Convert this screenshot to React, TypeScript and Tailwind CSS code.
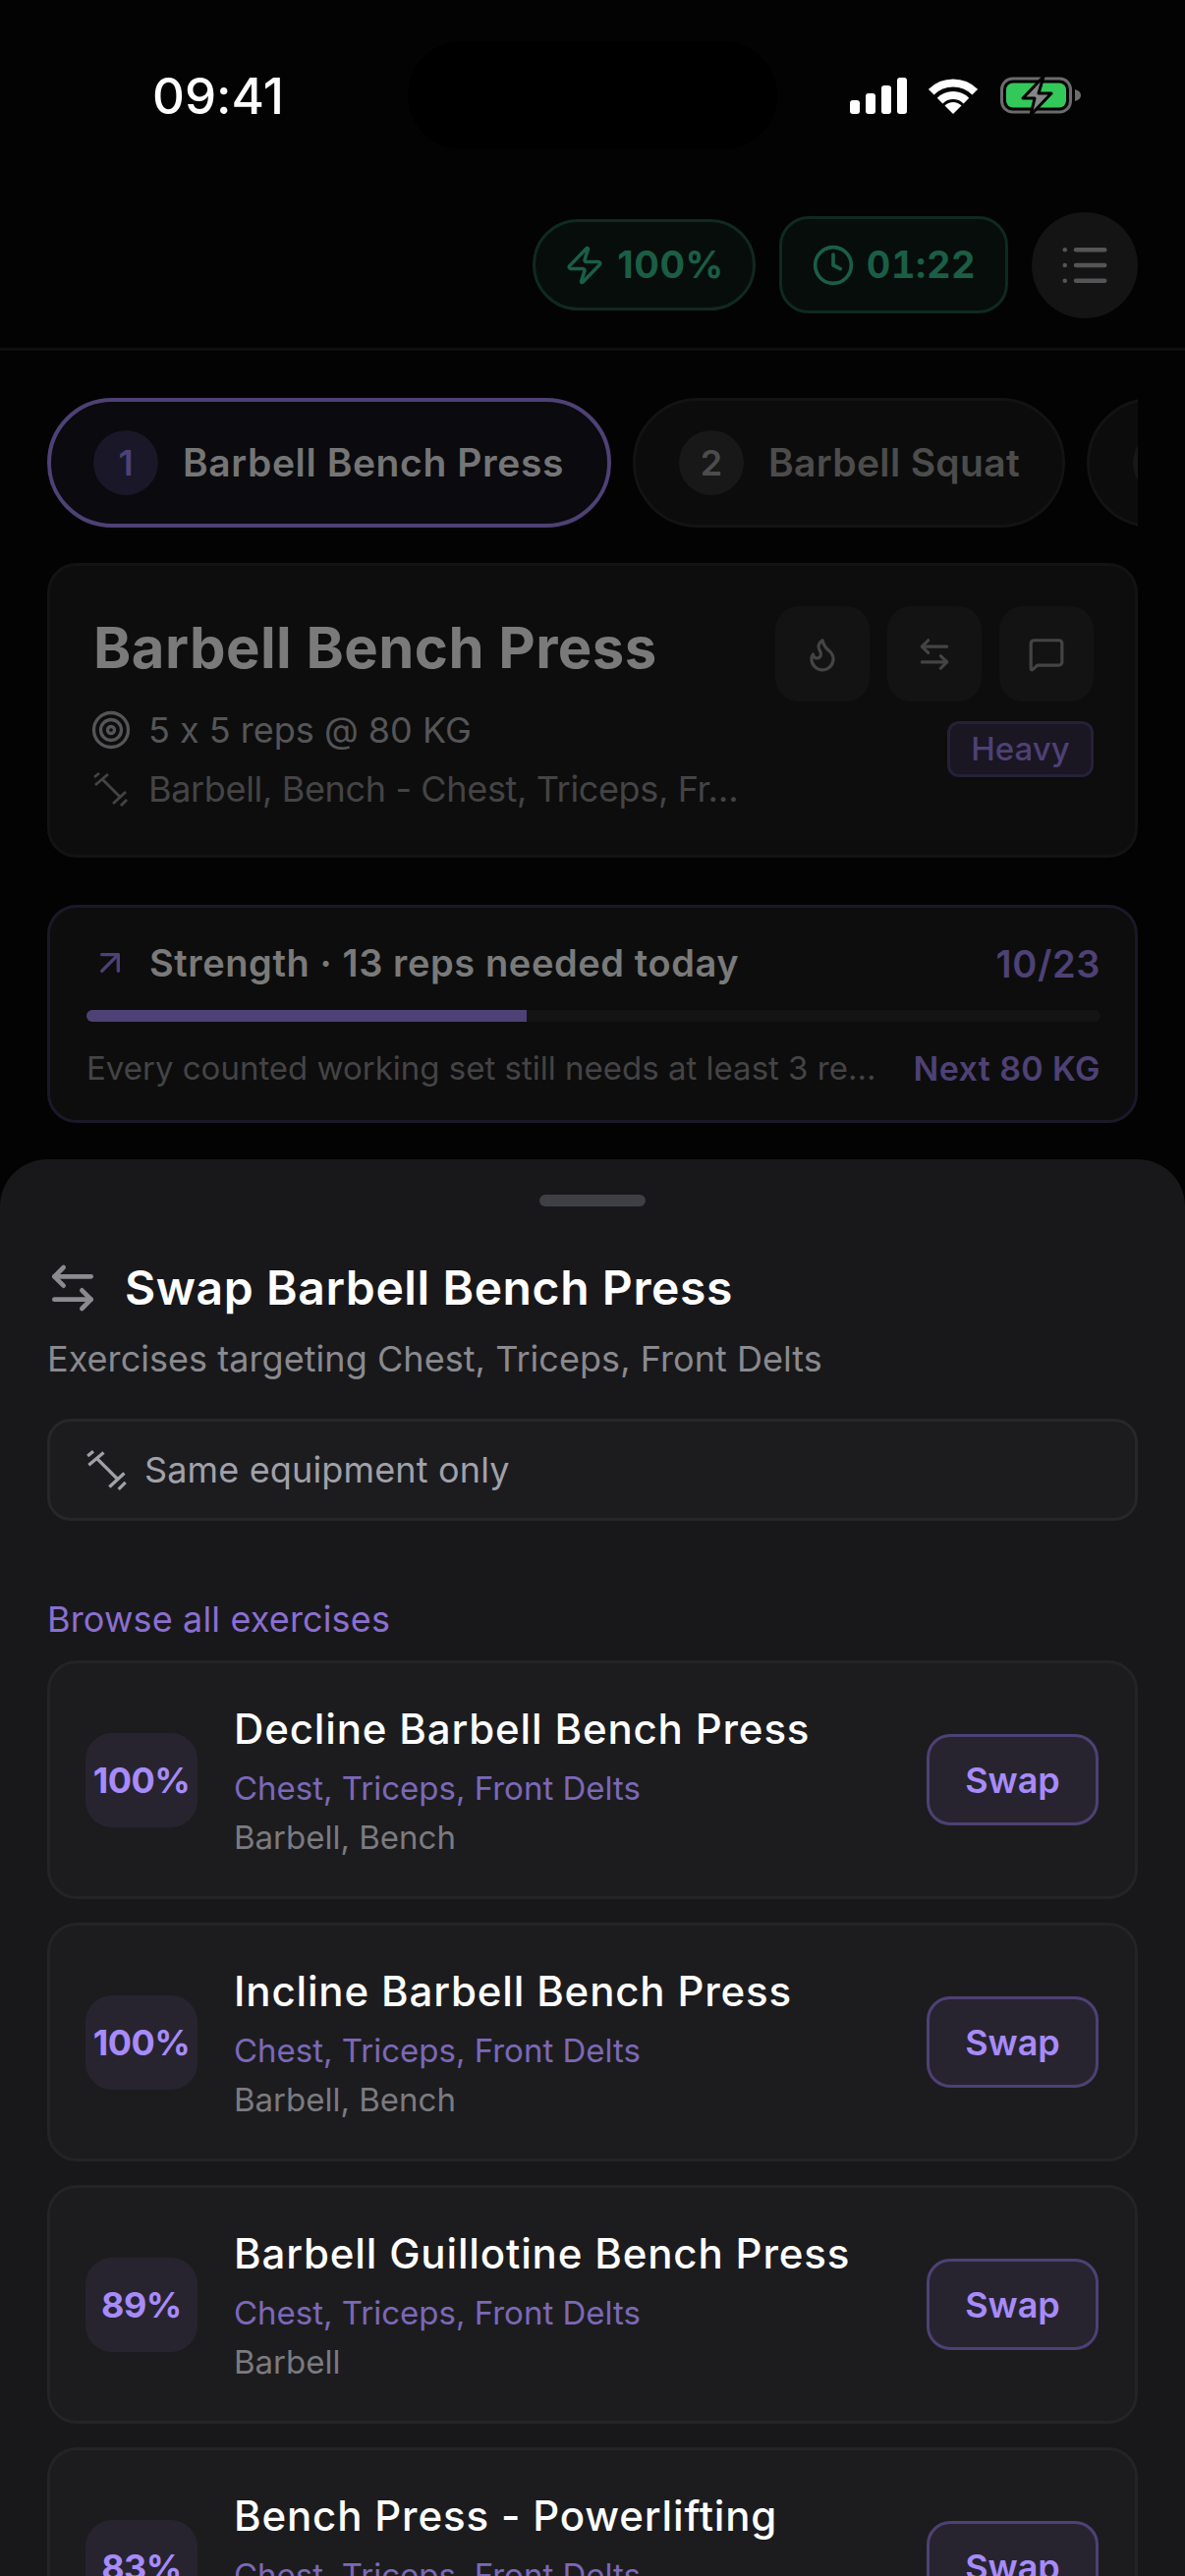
import { ArrowLeftRight, ArrowUpRight, Clock, Flame, List, MessageSquare, Target, Zap } from 'lucide-react';

type Exercise = {
  pct: string;
  name: string;
  equipment: string;
};

const exercises: Exercise[] = [
  { pct: '100%', name: 'Decline Barbell Bench Press', equipment: 'Barbell, Bench' },
  { pct: '100%', name: 'Incline Barbell Bench Press', equipment: 'Barbell, Bench' },
  { pct: '89%', name: 'Barbell Guillotine Bench Press', equipment: 'Barbell' },
  { pct: '83%', name: 'Bench Press - Powerlifting', equipment: 'Barbell, Bench' },
];

function Barbell({ className }: { className?: string }) {
  return (
    <svg viewBox="0 0 36 36" fill="none" stroke="currentColor" strokeWidth="2.8" className={className}>
      <path d="M9 8 L28 27" />
      <path d="M2 14 L15 3 M1 6 L6 2" />
      <path d="M20 33 L33 21 M28 35 L34 29" />
    </svg>
  );
}

function StatusIcons() {
  return (
    <div className="flex items-center">
      <svg width="58" height="37" viewBox="0 0 58 37" fill="#fff">
        <rect x="0" y="23" width="10" height="14" rx="3" />
        <rect x="16" y="16" width="10" height="21" rx="3" />
        <rect x="32" y="8" width="10" height="29" rx="3" />
        <rect x="48" y="0" width="10" height="37" rx="3" />
      </svg>
      <svg width="50" height="36" viewBox="0 0 50 36" fill="none" stroke="#fff" className="ml-[22px]">
        <path d="M2.7 13.7 A31.5 31.5 0 0 1 47.3 13.7" strokeWidth="8" />
        <path d="M11.6 22.6 A19 19 0 0 1 38.4 22.6" strokeWidth="8" />
        <path d="M25 36 L16.5 27.5 A12 12 0 0 1 33.5 27.5 Z" fill="#fff" stroke="none" />
      </svg>
      <svg width="82" height="41" viewBox="0 0 82 41" className="ml-[23px]">
        <rect x="1.5" y="3" width="70" height="34" rx="11" fill="none" stroke="#6b6b6b" strokeWidth="3" />
        <rect x="6" y="7.5" width="61" height="25" rx="7" fill="#34c759" />
        <path d="M76 14 C80 15 82 17 82 20 C82 23 80 25 76 26 Z" fill="#6b6b6b" />
        <path d="M44 1 L23 23 L35 23 L31 40 L52 18 L39 18 Z" fill="#858585" stroke="#000" strokeWidth="3" strokeLinejoin="round" />
      </svg>
    </div>
  );
}

function ExerciseCard({ item }: { item: Exercise }) {
  return (
    <div className="flex h-[243px] shrink-0 items-center rounded-[30px] border-[3px] border-[#242427] bg-[#1c1c1e] pl-[36px] pr-[37px]">
      <div className="flex h-[96px] w-[114px] shrink-0 items-center justify-center rounded-[27px] bg-[#27242f] text-[36px] font-bold tracking-[-0.5px] text-[#a78bfa]">
        {item.pct}
      </div>
      <div className="ml-[37px] mt-[4px] min-w-0 flex-1">
        <div className="text-[42px] leading-[54px] font-[550] tracking-[0.85px] text-white">{item.name}</div>
        <div className="mt-[8px] text-[33px] leading-[50px] text-[#7c68b8]">Chest, Triceps, Front Delts</div>
        <div className="text-[33px] leading-[50px] text-[#7b7b80]">{item.equipment}</div>
      </div>
      <div className="flex h-[93px] w-[175px] shrink-0 items-center justify-center rounded-[24px] border-[3px] border-[#4e4175] bg-[#27242f] text-[36px] font-semibold text-[#a78bfa]">
        Swap
      </div>
    </div>
  );
}

export default function App() {
  return (
    <div className="relative h-[2622px] w-[1206px] overflow-hidden bg-[#030303] font-['Inter',sans-serif] [font-feature-settings:'calt'_0]">
      {/* status bar */}
      <div className="flex h-[216px] justify-between pl-[155px] pr-[106px] pt-[70px]">
        <span className="text-[51px] leading-[56px] font-medium text-white">09:41</span>
        <div className="pt-[7px]">
          <StatusIcons />
        </div>
      </div>
      <div className="absolute left-[415px] top-[42px] h-[110px] w-[376px] rounded-[55px] bg-black" />

      {/* header */}
      <div className="flex h-[141px] items-start justify-end gap-[24px] border-b-[3px] border-[#0f0f0f] pr-[48px]">
        <div className="mt-[7px] flex h-[93px] w-[227px] items-center justify-center gap-[12px] rounded-full border-[3px] border-[#0f2a20] bg-[#070d0b] text-[38px] font-bold tracking-[0.6px] text-[#1a5e45]">
          <Zap size={42} strokeWidth={2} />
          <span>100%</span>
        </div>
        <div className="mt-[4px] flex h-[99px] w-[233px] items-center justify-center gap-[12px] rounded-[30px] border-[3px] border-[#0f2a20] bg-[#070d0b] text-[38px] font-bold tracking-[0.6px] tabular-nums text-[#1a5e45]">
          <Clock size={44} strokeWidth={2} />
          <span>01:22</span>
        </div>
        <div className="flex h-[108px] w-[108px] items-center justify-center rounded-full bg-[#141414] text-[#555558]">
          <List size={54} strokeWidth={2} />
        </div>
      </div>

      {/* exercise tabs */}
      <div className="ml-[48px] mr-[48px] mt-[48px] flex gap-[22px] overflow-hidden">
        <div className="flex h-[132px] w-[574px] shrink-0 items-center rounded-full border-[4px] border-[#4e4175] bg-[#0a0a0f] pl-[43px]">
          <span className="flex h-[66px] w-[66px] items-center justify-center rounded-full bg-[#1a1728] text-[36px] font-semibold text-[#4e4175]">1</span>
          <span className="ml-[25px] text-[39px] font-semibold tracking-[0.6px] text-[#757575]">Barbell Bench Press</span>
        </div>
        <div className="flex h-[132px] w-[440px] shrink-0 items-center rounded-full border-[3px] border-[#131313] bg-[#0c0c0c] pl-[44px]">
          <span className="flex h-[66px] w-[66px] items-center justify-center rounded-full bg-[#181818] text-[36px] font-semibold text-[#4c4c4c]">2</span>
          <span className="ml-[25px] text-[39px] font-semibold tracking-[0.35px] text-[#4c4c4c]">Barbell Squat</span>
        </div>
        <div className="flex h-[132px] w-[200px] shrink-0 items-center rounded-full border-[3px] border-[#131313] bg-[#0c0c0c] pl-[44px]">
          <span className="h-[66px] w-[66px] rounded-full bg-[#181818]" />
        </div>
      </div>

      {/* current exercise */}
      <div className="ml-[48px] mr-[48px] mt-[36px] h-[300px] rounded-[30px] border-[3px] border-[#131313] bg-[#0d0d0d] pl-[44px] pr-[42px] pt-[41px]">
        <div className="flex items-start justify-between">
          <div className="min-w-0 flex-1 pt-[9px]">
            <div className="text-[58px] leading-[66px] font-bold tracking-[0.45px] text-[#7a7a7a]">Barbell Bench Press</div>
            <div className="mt-[21px] flex h-[60px] items-center text-[36px] text-[#555558]">
              <Target size={42} strokeWidth={1.9} className="-ml-[3px] shrink-0" />
              <span className="ml-[17px]">5 x 5 reps @ 80 KG</span>
            </div>
            <div className="flex h-[60px] items-center text-[36px] text-[#444446]">
              <Barbell className="h-[36px] w-[36px] shrink-0" />
              <span className="ml-[20px] tracking-[-0.35px]">Barbell, Bench - Chest, Triceps, Fr…</span>
            </div>
          </div>
          <div className="flex flex-col items-end">
            <div className="flex gap-[18px]">
              <div className="flex h-[97px] w-[96px] items-center justify-center rounded-[24px] bg-[#131313] text-[#444446]">
                <Flame size={38} strokeWidth={2} />
              </div>
              <div className="flex h-[97px] w-[96px] items-center justify-center rounded-[24px] bg-[#131313] text-[#444446]">
                <ArrowLeftRight size={38} strokeWidth={2} />
              </div>
              <div className="flex h-[97px] w-[96px] items-center justify-center rounded-[24px] bg-[#131313] text-[#444446]">
                <MessageSquare size={38} strokeWidth={2} />
              </div>
            </div>
            <div className="mt-[20px] flex h-[57px] w-[149px] items-center justify-center rounded-[12px] border-[3px] border-[#262038] bg-[#1a1622] text-[33px] font-medium text-[#4e4175]">
              Heavy
            </div>
          </div>
        </div>
      </div>

      {/* strength progress */}
      <div className="ml-[48px] mr-[48px] mt-[48px] h-[222px] rounded-[30px] border-[3px] border-[#1b1828] bg-[#0d0d0d] pl-[37px] pr-[35px] pt-[28px]">
        <div className="flex h-[56px] items-center justify-between">
          <div className="flex items-center">
            <ArrowUpRight size={40} strokeWidth={2} className="ml-[4px] text-[#4e4175]" />
            <span className="ml-[20px] text-[38px] font-semibold tracking-[0.6px] text-[#7a7a7a]">Strength · 13 reps needed today</span>
          </div>
          <span className="mt-[2px] text-[38px] font-semibold tracking-[0.6px] text-[#4e4175]">10/23</span>
        </div>
        <div className="mt-[20px] h-[12px] overflow-hidden rounded-full bg-[#141414]">
          <div className="h-full w-[43.4%] bg-[#4e4175]" />
        </div>
        <div className="mt-[24px] flex h-[48px] items-center justify-between">
          <span className="text-[33px] text-[#444446]">Every counted working set still needs at least 3 re…</span>
          <span className="-mt-[2px] text-[34px] font-semibold tracking-[0.4px] text-[#4e4175]">Next 80 KG</span>
        </div>
      </div>

      {/* swap sheet */}
      <div className="absolute bottom-0 left-0 right-0 top-[1180px] overflow-hidden rounded-t-[48px] bg-[#18181b] px-[48px]">
        <div className="mx-auto mt-[36px] h-[12px] w-[108px] rounded-[6px] bg-[#3f3f46]" />
        <div className="mt-[52px] flex h-[62px] items-center">
          <ArrowLeftRight size={56} strokeWidth={2} className="-ml-[2px] text-[#8a8a8f]" />
          <span className="ml-[25px] text-[48px] font-semibold tracking-[0.6px] text-white">Swap Barbell Bench Press</span>
        </div>
        <div className="mt-[16px] text-[36px] leading-[50px] tracking-[0.05px] text-[#8a8a8f]">Exercises targeting Chest, Triceps, Front Delts</div>
        <div className="mt-[36px] flex h-[104px] items-center rounded-[24px] border-[3px] border-[#27272a] bg-[#1c1c1f] pl-[37px] text-[36px] tracking-[0.15px] text-[#a1a1aa]">
          <Barbell className="h-[42px] w-[42px] shrink-0" />
          <span className="ml-[17px]">Same equipment only</span>
        </div>
        <div className="mt-[75px] text-[36px] leading-[50px] tracking-[0.15px] text-[#8b6fd1]">Browse all exercises</div>
        <div className="mt-[17px] flex flex-col gap-[24px]">
          {exercises.map((item) => (
            <ExerciseCard key={item.name} item={item} />
          ))}
        </div>
      </div>
    </div>
  );
}
